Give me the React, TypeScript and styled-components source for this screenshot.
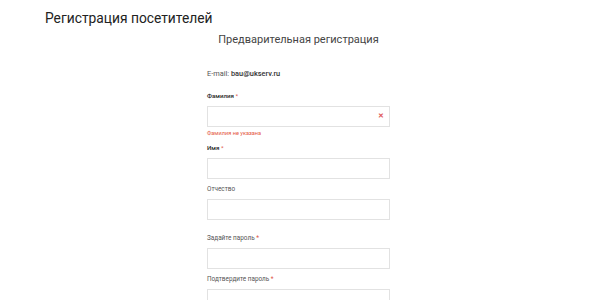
import styled, { createGlobalStyle } from 'styled-components';

const GlobalStyle = createGlobalStyle`
  body {
    margin: 0;
    background: #ffffff;
    font-family: Roboto, "Noto Sans", Arial, sans-serif;
    color: #333333;
  }
`;

const Page = styled.div`
  padding: 10px 0 0 45px;
`;

const Title = styled.h1`
  margin: 0;
  font-size: 13.8px;
  font-weight: 400;
  line-height: 17px;
  color: #222222;
`;

const SubTitle = styled.h2`
  margin: 6px 0 0 0;
  width: 507px;
  text-align: center;
  font-size: 11px;
  font-weight: 400;
  line-height: 13px;
  color: #444444;
`;

const Form = styled.form`
  margin: 23px 0 0 162px;
  width: 183px;
  display: flex;
  flex-direction: column;
`;

const Email = styled.div`
  font-size: 7.4px;
  line-height: 9px;
  color: #555555;
  margin-bottom: 14px;

  & > b {
    font-weight: 500;
    color: #333333;
  }
`;

const Field = styled.div<{ $gap: number }>`
  display: flex;
  flex-direction: column;
  margin-bottom: ${(p) => p.$gap}px;
`;

const Label = styled.label<{ $strong?: boolean }>`
  font-size: ${(p) => (p.$strong ? 6.2 : 6.4)}px;
  line-height: 8px;
  font-weight: ${(p) => (p.$strong ? 500 : 400)};
  color: ${(p) => (p.$strong ? '#2a2a2a' : '#555555')};
  margin-bottom: 6px;
`;

const Star = styled.span`
  color: #e0574a;
  font-weight: 400;
`;

const InputWrap = styled.div`
  position: relative;
`;

const Input = styled.input`
  box-sizing: border-box;
  width: 183px;
  height: 21px;
  margin: 0;
  border: 1px solid #e2e2e2;
  background: #ffffff;
  outline: none;
  padding: 0 6px;
`;

const ClearMark = styled.span`
  position: absolute;
  right: 6px;
  top: 6px;
  font-size: 7px;
  line-height: 9px;
  font-weight: 700;
  color: #e05a5a;
`;

const Error = styled.div`
  font-size: 5.6px;
  line-height: 8px;
  color: #e4593f;
  margin-top: 2px;
`;

interface FieldDef {
  label: string;
  required: boolean;
  strong: boolean;
  error?: string;
  gap: number;
}

const fields: FieldDef[] = [
  { label: 'Фамилия', required: true, strong: true, error: 'Фамилия не указана', gap: 7 },
  { label: 'Имя', required: true, strong: true, gap: 6 },
  { label: 'Отчество', required: false, strong: false, gap: 14 },
  { label: 'Задайте пароль', required: true, strong: false, gap: 6 },
  { label: 'Подтвердите пароль', required: true, strong: false, gap: 6 },
];

function App() {
  return (
    <>
      <GlobalStyle />
      <Page>
        <Title>Регистрация посетителей</Title>
        <SubTitle>Предварительная регистрация</SubTitle>
        <Form>
          <Email>
            E-mail: <b>bau@ukserv.ru</b>
          </Email>
          {fields.map((f) => (
            <Field key={f.label} $gap={f.gap}>
              <Label $strong={f.strong}>
                {f.label}
                {f.required && <Star> *</Star>}
              </Label>
              <InputWrap>
                <Input />
                {f.error && <ClearMark>✕</ClearMark>}
              </InputWrap>
              {f.error && <Error>{f.error}</Error>}
            </Field>
          ))}
        </Form>
      </Page>
    </>
  );
}

export default App;
